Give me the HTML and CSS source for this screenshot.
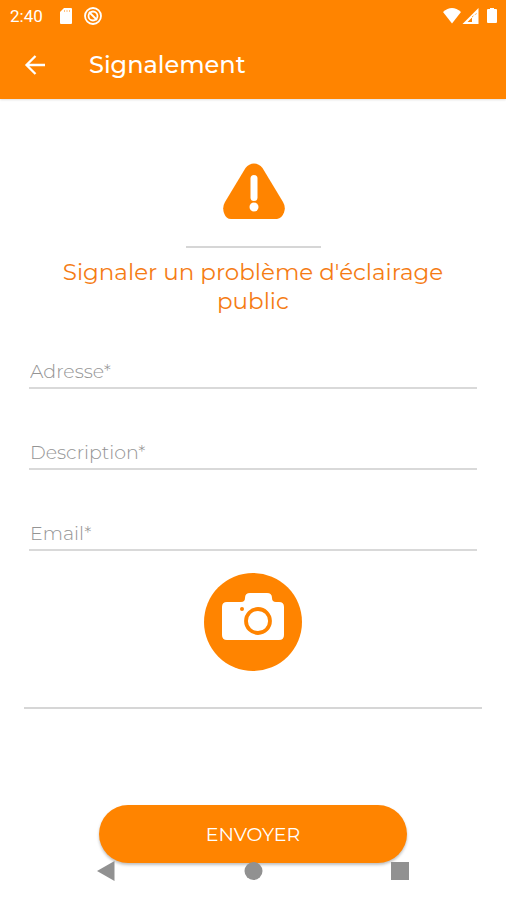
FILE: index.html
```html
<!DOCTYPE html>
<html lang="fr">
<head>
<meta charset="utf-8">
<meta name="viewport" content="width=device-width, initial-scale=1">
<title>Signalement</title>
<link rel="stylesheet" href="styles.css">
</head>
<body>
<header class="header">
  <div class="status">
    <span class="time">2:40</span>
    <svg class="sd" width="14" height="18" viewBox="0 0 14 18" aria-hidden="true"><path fill="#fff" d="M5 1h7q1 0 1 1v14q0 1-1 1H2q-1 0-1-1V5z"/><path stroke="#ff8400" stroke-opacity=".5" d="M5.500 3v2M8 3v2M10.500 3v2"/></svg>
    <svg class="sync" width="20" height="20" viewBox="0 0 20 20" fill="none" stroke="#fff" aria-hidden="true"><circle cx="10" cy="10" r="8" stroke-width="1.800"/><circle cx="10" cy="10" r="4.500" stroke-width="1.800"/><path stroke-width="1.800" d="M6 6l8 8"/></svg>
    <span class="signals">
      <svg width="20" height="18" viewBox="0 0 20 18" aria-hidden="true"><path fill="#fff" d="M1 5Q10-3 19 5L10 16.500z"/></svg>
      <svg width="18" height="18" viewBox="0 0 18 18" aria-hidden="true"><path fill="#fff" fill-rule="evenodd" d="M16.500 1v16H.5zM14.500 6L5.500 15H10V9.500L14.500 7z"/><path stroke="#fff" stroke-width="1.500" d="M12.500 9v5M12.500 15v1"/></svg>
      <svg class="battery" width="12" height="18" viewBox="0 0 12 18" aria-hidden="true"><path fill="#fff" d="M4 1h4v1h2q1 0 1 1v12q0 1-1 1H2q-1 0-1-1V3q0-1 1-1h2z"/></svg>
    </span>
  </div>
  <div class="appbar">
    <button class="back" type="button" aria-label="Retour"><svg width="22" height="22" viewBox="0 0 22 22" fill="none" stroke="#fff" stroke-width="2.300" aria-hidden="true"><path d="M21 11H3M11.500 2L2.500 11l9 9"/></svg></button>
    <h1 class="title">Signalement</h1>
  </div>
</header>
<main class="main">
  <svg class="warning" width="64" height="60" viewBox="0 0 64 60" aria-hidden="true"><path fill="#ff8400" d="M24.500 7Q28 2.500 33 2.500t8.500 4.500L62 41Q65 46 63 51.500T56 58H10Q5 58 3 52T4 41z"/><rect x="29.500" y="14" width="7" height="26" rx="3.500" fill="#fff"/><circle cx="33" cy="46" r="4.500" fill="#fff"/></svg>
  <hr class="rule">
  <h2 class="heading">Signaler un problème d'éclairage public</h2>
  <form class="form">
    <input class="field" type="text" placeholder="Adresse*" aria-label="Adresse">
    <input class="field" type="text" placeholder="Description*" aria-label="Description">
    <input class="field" type="email" placeholder="Email*" aria-label="Email">
    <button class="photo" type="button" aria-label="Ajouter une photo"><svg width="64" height="50" viewBox="0 0 64 50" aria-hidden="true"><path fill="#fff" d="M6 10h14q4 0 4-4 0-5 5-5h17q5 0 5 5 0 4 4 4h3q5 0 5 5v28q0 5-5 5H6q-5 0-5-5V15q0-5 5-5z"/><circle cx="37" cy="29" r="12" fill="none" stroke="#ff8400" stroke-width="3.800"/><circle cx="21" cy="17" r="2" fill="#ff8400"/></svg></button>
    <hr class="divider">
    <button class="send" type="submit">ENVOYER</button>
  </form>
</main>
<nav class="navbar" aria-label="Système">
  <button class="key" type="button" aria-label="Précédent"><svg width="20" height="20" viewBox="0 0 20 20" aria-hidden="true"><path fill="#919191" d="M1 10L18.500 0v20z"/></svg></button>
  <button class="key" type="button" aria-label="Accueil"><svg width="20" height="20" viewBox="0 0 20 20" aria-hidden="true"><circle cx="10.500" cy="10" r="9" fill="#919191"/></svg></button>
  <button class="key" type="button" aria-label="Applications"><svg width="20" height="20" viewBox="0 0 20 20" aria-hidden="true"><path fill="#919191" d="M1 1h18v18H1z"/></svg></button>
</nav>
</body>
</html>
```
FILE: styles.css
```css
* {
  box-sizing: border-box;
}

body {
  margin: 0;
  min-height: 100vh;
  position: relative;
  background: #fff;
  font-family: Montserrat, Inter, sans-serif;
}

button {
  border: 0;
  padding: 0;
  background: none;
  font: inherit;
}

svg {
  display: block;
}

.header {
  background: #ff8400;
  color: #fff;
  box-shadow: 0 1px 2px rgba(0, 0, 0, 0.12);
}

.status {
  display: flex;
  align-items: center;
  height: 31px;
  padding: 0 8px 0 10px;
}

.time {
  font: 17px/32px Roboto, sans-serif;
}

.sd {
  margin-left: 16px;
}

.sync {
  margin-left: 10px;
}

.signals {
  display: flex;
  margin-left: auto;
}

.battery {
  margin-left: 6px;
}

.appbar {
  display: flex;
  align-items: center;
  height: 68px;
  padding: 0 24px;
}

.title {
  margin: 0 0 0 43px;
  font-size: 24px;
  line-height: 32px;
  font-weight: 500;
}

.main {
  display: flex;
  flex-direction: column;
  align-items: center;
  padding: 62px 24px 36px;
}

.rule,
.divider {
  height: 2px;
  border: 0;
  background: #d6d6d6;
}

.rule {
  width: 135px;
  margin: 25px 0 10px;
}

.heading {
  margin: 0;
  padding: 0 16px;
  color: #f57c14;
  font-size: 23px;
  line-height: 29px;
  font-weight: 400;
  text-align: center;
}

.form {
  display: flex;
  flex-direction: column;
  align-items: center;
  align-self: stretch;
  padding-top: 41px;
}

.field {
  align-self: stretch;
  height: 32px;
  margin: 0 5px 49px;
  padding: 0 0 2px 1px;
  border: 0;
  border-bottom: 2px solid #d9d9d9;
  border-radius: 0;
  outline: 0;
  background: none;
  color: #444;
  font: 300 19px/24px Montserrat, Inter, sans-serif;
}

.field::placeholder {
  color: #949494;
  opacity: 1;
}

.field:focus {
  border-color: #ff8400;
}

.photo {
  display: grid;
  place-items: center;
  width: 98px;
  height: 98px;
  margin-top: -27px;
  padding-bottom: 10px;
  border-radius: 50%;
  background: #ff8400;
}

.divider {
  align-self: stretch;
  margin: 36px 0 96px;
}

.send {
  width: 308px;
  max-width: 100%;
  height: 58px;
  border-radius: 29px;
  background: #ff8400;
  color: #fff;
  font-size: 19px;
  box-shadow: 0 2px 3px rgba(0, 0, 0, 0.25);
}

.navbar {
  position: absolute;
  right: 0;
  bottom: 19px;
  left: 0;
  display: flex;
  justify-content: space-between;
  padding: 0 96px;
}
```
